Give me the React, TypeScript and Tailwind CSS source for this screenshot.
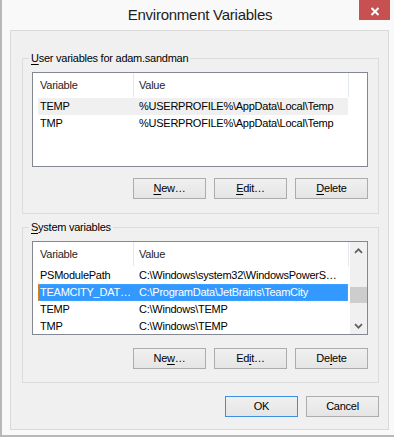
import React from "react";

function Btn({ children, def }: { children: React.ReactNode; def?: boolean }) {
  return (
    <div
      className={`w-[73px] h-[21px] flex items-center justify-center border ${
        def ? "border-[#3c8fe0]" : "border-[#acacac]"
      } bg-linear-to-b from-[#f0f0f0] to-[#e5e5e5] text-[11px] tracking-[-0.25px] text-black leading-none`}
    >
      {children}
    </div>
  );
}

function U({ c }: { c: string }) {
  return <span className="underline underline-offset-[2px] decoration-1">{c}</span>;
}

type Row = { n: string; v: string; hl?: boolean; sel?: boolean };

function Chevron({ down }: { down?: boolean }) {
  return (
    <svg width="9" height="6" viewBox="0 0 9 6">
      <path
        d={down ? "M1 1.2 L4.5 4.7 L8 1.2" : "M1 4.8 L4.5 1.3 L8 4.8"}
        fill="none"
        stroke="#606060"
        strokeWidth="1.7"
      />
    </svg>
  );
}

function List({ rows, h, scroll }: { rows: Row[]; h: string; scroll?: boolean }) {
  return (
    <div className={`w-[336px] ${h} border border-[#828790] bg-white flex overflow-hidden`}>
      <div className="flex-1 min-w-0 flex flex-col">
        <div className="h-[25px] flex shrink-0 text-[#1e1e1e]">
          <div className="w-[101px] h-[24px] border-r border-[#e3e8ee] pl-[7px] flex items-center">Variable</div>
          <div className="w-[215px] h-[24px] border-r border-[#e3e8ee] pl-[5px] flex items-center">Value</div>
          <div className="flex-1" />
        </div>
        <div className="pl-[5px] flex flex-col">
          {rows.map((r, i) => (
            <div
              key={i}
              className={`w-[310px] h-[17px] shrink-0 flex items-center whitespace-nowrap ${
                r.sel
                  ? "bg-[#3399ff] text-white outline-1 outline-dotted outline-[#d9892e] -outline-offset-1"
                  : r.hl
                  ? "bg-[#f0f0f0] text-black"
                  : "text-black"
              }`}
            >
              <div className="w-[95px] pl-[2px] overflow-hidden">{r.n}</div>
              <div className="flex-1 pl-[6px] overflow-hidden">{r.v}</div>
            </div>
          ))}
        </div>
      </div>
      {scroll && (
        <div className="w-[17px] h-full bg-[#f0f0f0] flex flex-col shrink-0">
          <div className="h-[17px] flex items-center justify-center">
            <Chevron />
          </div>
          <div className="flex-1 flex flex-col">
            <div className="mt-[28px] h-[16px] w-full bg-[#cdcdcd]" />
          </div>
          <div className="h-[17px] flex items-center justify-center">
            <Chevron down />
          </div>
        </div>
      )}
    </div>
  );
}

export default function App() {
  return (
    <div className="w-[394px] h-[437px] bg-[#f9f9f9] border-l-2 border-b-2 border-[#b8b8b8] flex flex-col overflow-hidden relative font-['Liberation_Sans',Arial,sans-serif] text-[11px] tracking-[-0.25px] text-black">
      <div className="h-[30px] shrink-0 flex items-center justify-center">
        <span className="text-[15px] tracking-[-0.25px] text-[#1e1e1e] pl-[4px]">Environment Variables</span>
      </div>
      <div className="absolute right-[4px] top-0 w-[31px] h-[20px] bg-[#c75050] flex items-center justify-center">
        <svg width="10" height="9" viewBox="0 0 10 9" className="mt-[2px]">
          <path d="M1.5 1 L8.5 8 M8.5 1 L1.5 8" stroke="white" strokeWidth="2" fill="none" />
        </svg>
      </div>
      <div className="ml-[8px] w-[379px] h-[400px] shrink-0 bg-[#f0f0f0] border border-[#d9d9d9] pl-[11px] pt-[19px] flex flex-col">
        <fieldset className="w-[357px] border border-[#dcdcdc] pl-[9px] pr-[10px] pt-[6px] pb-[14px]">
          <legend className="-ml-[3px] px-[2px] leading-[16px]">
            <U c="U" />ser variables for adam.sandman
          </legend>
          <List
            h="h-[95px]"
            rows={[
              { n: "TEMP", v: "%USERPROFILE%\\AppData\\Local\\Temp", hl: true },
              { n: "TMP", v: "%USERPROFILE%\\AppData\\Local\\Temp" },
            ]}
          />
          <div className="mt-[11px] flex justify-end gap-[8px]">
            <Btn>
              <U c="N" />ew…
            </Btn>
            <Btn>
              <U c="E" />dit…
            </Btn>
            <Btn>
              <U c="D" />elete
            </Btn>
          </div>
        </fieldset>
        <fieldset className="mt-[5px] w-[357px] border border-[#dcdcdc] pl-[9px] pr-[10px] pt-[6px] pb-[13px]">
          <legend className="-ml-[3px] px-[2px] leading-[16px]">
            <U c="S" />ystem variables
          </legend>
          <List
            h="h-[94px]"
            scroll
            rows={[
              { n: "PSModulePath", v: "C:\\Windows\\system32\\WindowsPowerS…" },
              { n: "TEAMCITY_DAT…", v: "C:\\ProgramData\\JetBrains\\TeamCity", sel: true },
              { n: "TEMP", v: "C:\\Windows\\TEMP" },
              { n: "TMP", v: "C:\\Windows\\TEMP" },
            ]}
          />
          <div className="mt-[13px] flex justify-end gap-[8px]">
            <Btn>
              Ne<U c="w" />…
            </Btn>
            <Btn>
              Ed<U c="i" />t…
            </Btn>
            <Btn>
              De<U c="l" />ete
            </Btn>
          </div>
        </fieldset>
        <div className="mt-[13px] w-[357px] flex justify-end gap-[8px]">
          <Btn def>OK</Btn>
          <Btn>Cancel</Btn>
        </div>
      </div>
    </div>
  );
}
